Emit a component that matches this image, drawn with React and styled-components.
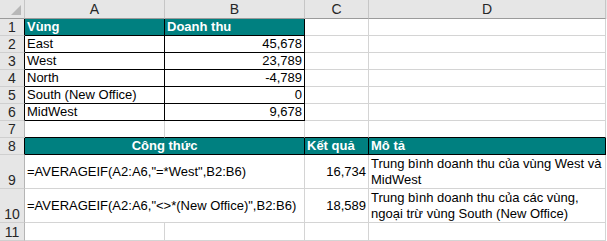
import React from 'react';
import styled, { createGlobalStyle } from 'styled-components';

const GlobalStyle = createGlobalStyle`
  html, body {
    margin: 0;
    padding: 0;
    background: #ffffff;
  }
`;

const GRID = '#d4d4d4';
const INK = '#000000';
const TEAL = '#008080';

const Sheet = styled.div`
  display: grid;
  grid-template-columns: 25px 140px 140px 64px 237px 1px;
  grid-template-rows: 19px repeat(8, 17px) 34px 34px 18px;
  width: 607px;
  height: 241px;
  overflow: hidden;
  font-family: 'Liberation Sans', Arial, sans-serif;
  font-size: 13px;
  color: #000;
  background: #fff;
`;

const HeadBase = styled.div`
  box-sizing: border-box;
  background: #e6e6e6;
  color: #262626;
  font-size: 14px;
  display: flex;
  justify-content: center;
`;

const Corner = styled(HeadBase)`
  position: relative;
  border-right: 1px solid #c6c6c6;
  border-bottom: 1px solid #9b9b9b;

  &::after {
    content: '';
    position: absolute;
    right: 3px;
    bottom: 3px;
    width: 10px;
    height: 10px;
    background: #b8b8b8;
    clip-path: polygon(100% 0, 100% 100%, 0 100%);
  }
`;

const ColHead = styled(HeadBase)`
  align-items: center;
  border-right: 1px solid #c6c6c6;
  border-bottom: 1px solid #9b9b9b;
  line-height: 18px;
`;

const RowHead = styled(HeadBase)`
  align-items: flex-end;
  line-height: 16px;
  border-bottom: 1px solid #cfcfcf;
  border-right: 1px solid ${p => (p.$edge ? INK : '#b5b5b5')};
`;

const Cell = styled.div`
  box-sizing: border-box;
  display: flex;
  align-items: center;
  justify-content: ${p =>
    p.$align === 'right' ? 'flex-end' : p.$align === 'center' ? 'center' : 'flex-start'};
  grid-column: ${p => (p.$span ? `span ${p.$span}` : 'auto')};
  padding: 0 2px 0 2px;
  white-space: pre;
  line-height: 16px;
  background: ${p => (p.$fill ? TEAL : '#fff')};
  color: ${p => (p.$fill ? '#fff' : '#000')};
  font-weight: ${p => (p.$fill ? 700 : 400)};
  border-right: 1px solid ${p => (p.$inkRight ? INK : GRID)};
  border-bottom: 1px solid ${p => (p.$inkBottom ? INK : GRID)};
`;

const Filler = styled.div`
  background: ${p => (p.$head ? '#e6e6e6' : '#fff')};
`;

const regions = [
  ['East', '45,678'],
  ['West', '23,789'],
  ['North', '-4,789'],
  ['South (New Office)', '0'],
  ['MidWest', '9,678'],
];

const formulas = [
  {
    formula: '=AVERAGEIF(A2:A6,"=*West",B2:B6)',
    result: '16,734',
    note: 'Trung bình doanh thu của vùng West và\nMidWest',
  },
  {
    formula: '=AVERAGEIF(A2:A6,"<>*(New Office)",B2:B6)',
    result: '18,589',
    note: 'Trung bình doanh thu của các vùng,\nngoại trừ vùng South (New Office)',
  },
];

// blank C and D cells plus the 1px strip past column D
function EmptyPair({ ink }) {
  return (
    <>
      <Cell $inkBottom={ink} />
      <Cell $inkBottom={ink} />
      <Filler />
    </>
  );
}

export default function App() {
  return (
    <>
      <GlobalStyle />
      <Sheet>
        <Corner />
        {['A', 'B', 'C', 'D'].map(c => (
          <ColHead key={c}>{c}</ColHead>
        ))}
        <Filler $head />

        <RowHead $edge>1</RowHead>
        <Cell $fill $inkRight $inkBottom>Vùng</Cell>
        <Cell $fill $inkRight $inkBottom>Doanh thu</Cell>
        <EmptyPair />

        {regions.map(([name, amount], i) => (
          <React.Fragment key={name}>
            <RowHead $edge>{i + 2}</RowHead>
            <Cell $inkRight $inkBottom>{name}</Cell>
            <Cell $align="right" $inkRight $inkBottom>{amount}</Cell>
            <EmptyPair />
          </React.Fragment>
        ))}

        <RowHead>7</RowHead>
        <Cell $inkBottom />
        <Cell $inkBottom />
        <EmptyPair ink />

        <RowHead $edge>8</RowHead>
        <Cell $span={2} $align="center" $fill $inkRight $inkBottom>Công thức</Cell>
        <Cell $fill $inkRight $inkBottom>Kết quả</Cell>
        <Cell $fill $inkRight $inkBottom>Mô tả</Cell>
        <Filler />

        {formulas.map((f, i) => (
          <React.Fragment key={f.result}>
            <RowHead>{i + 9}</RowHead>
            <Cell $span={2}>{f.formula}</Cell>
            <Cell $align="right">{f.result}</Cell>
            <Cell>{f.note}</Cell>
            <Filler />
          </React.Fragment>
        ))}

        <RowHead>11</RowHead>
        <Cell />
        <Cell />
        <EmptyPair />
      </Sheet>
    </>
  );
}
